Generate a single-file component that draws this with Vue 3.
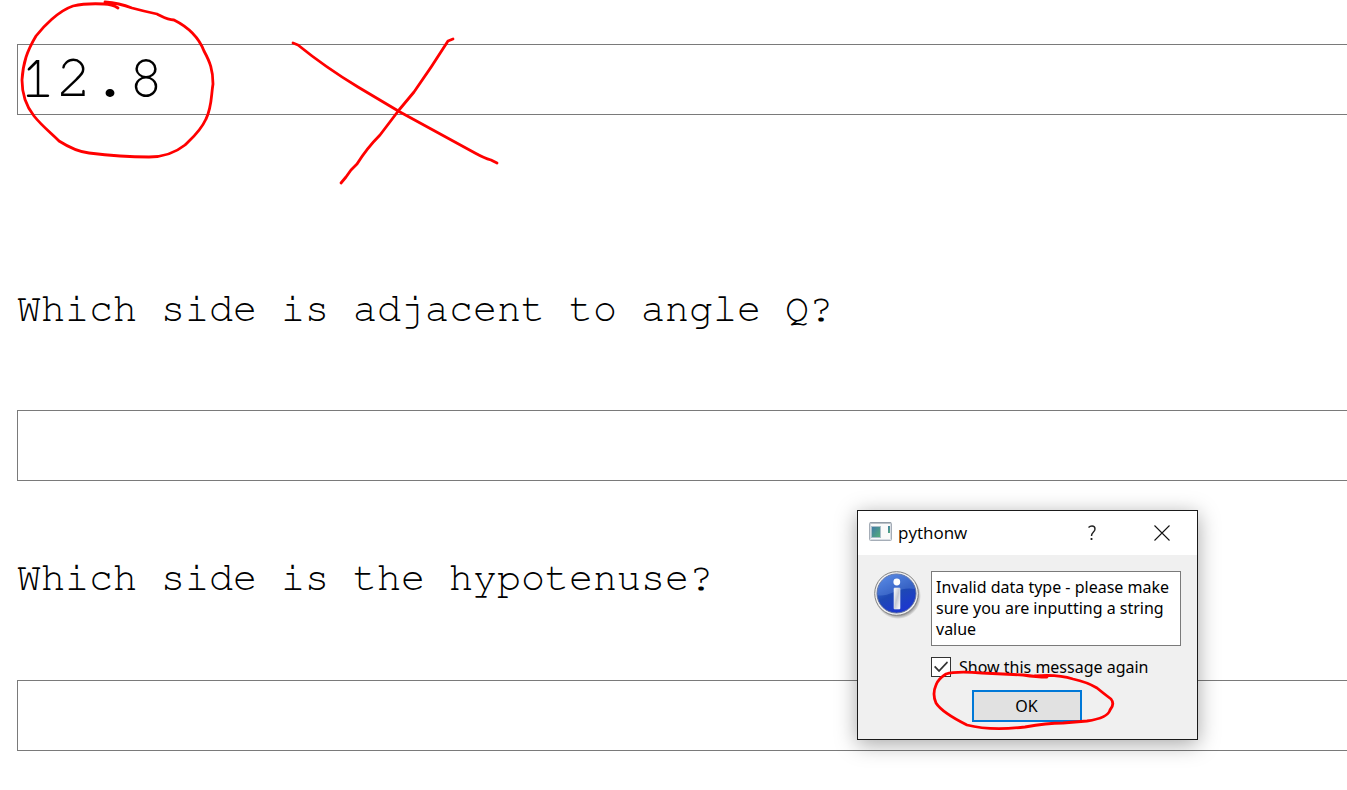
<script setup>
import { ref } from 'vue'

const side = ref('12.8')
const adjacent = ref('')
const hypotenuse = ref('')
const showAgain = ref(true)
</script>

<template>
  <div class="page">
    <form class="sheet" @submit.prevent>
      <input v-model="side" class="field" type="text" aria-label="Side length" />
      <label class="question first" for="adjacent">Which side is adjacent to angle Q?</label>
      <input id="adjacent" v-model="adjacent" class="field" type="text" />
      <label class="question" for="hypotenuse">Which side is the hypotenuse?</label>
      <input id="hypotenuse" v-model="hypotenuse" class="field" type="text" />
    </form>

    <section class="dialog" role="dialog" aria-labelledby="dialog-title">
      <header class="titlebar">
        <svg class="app-icon" width="23" height="19" viewBox="0 0 23 19" aria-hidden="true">
          <defs>
            <linearGradient id="pane" x1="0" y1="0" x2="1" y2="1">
              <stop offset="0" stop-color="#3f77a8" />
              <stop offset="1" stop-color="#56b177" />
            </linearGradient>
          </defs>
          <rect x="0.5" y="0.5" width="22" height="18" rx="1" fill="#fafafa" stroke="#a5adb7" />
          <path d="M1 1H22" stroke="#7d8894" />
          <path d="M1.5 2V17.5H21.5V2" fill="none" stroke="#d7dce3" />
          <rect x="2.5" y="4.5" width="9" height="11" fill="url(#pane)" stroke="#a9bfc9" />
          <rect x="19" y="4" width="2" height="7" fill="url(#pane)" />
        </svg>
        <h1 id="dialog-title" class="title">pythonw</h1>
        <button class="caption-button" type="button" aria-label="Help">
          <svg width="10" height="16" viewBox="0 0 10 16" aria-hidden="true">
            <path d="M1.5 2.5Q3 1 5 1Q8 1 8 4C8 7 4.5 7 4.5 11" fill="none" stroke="#222" stroke-width="1.4" />
            <rect x="3.6" y="13" width="1.8" height="2" fill="#222" />
          </svg>
        </button>
        <button class="caption-button" type="button" aria-label="Close">
          <svg width="16" height="16" viewBox="0 0 16 16" aria-hidden="true">
            <path d="M0.5 0.5L15.5 15.5M15.5 0.5L0.5 15.5" stroke="#111" stroke-width="1.1" />
          </svg>
        </button>
      </header>

      <div class="body">
        <svg class="info" width="48" height="48" viewBox="0 0 48 48" aria-hidden="true">
          <defs>
            <linearGradient id="disc" x1="0.2" y1="0" x2="0.7" y2="1">
              <stop offset="0" stop-color="#4b7fe0" />
              <stop offset="0.5" stop-color="#1e49b4" />
              <stop offset="1" stop-color="#1c35d2" />
            </linearGradient>
            <linearGradient id="stem" x1="0" y1="0" x2="1" y2="1">
              <stop offset="0" stop-color="#fff" />
              <stop offset="0.5" stop-color="#c4c8d2" />
              <stop offset="1" stop-color="#fff" />
            </linearGradient>
            <radialGradient id="shade">
              <stop offset="0.8" stop-color="#000" stop-opacity="0.45" />
              <stop offset="1" stop-color="#000" stop-opacity="0" />
            </radialGradient>
          </defs>
          <circle cx="24" cy="25" r="23" fill="url(#shade)" />
          <circle cx="22.5" cy="22.5" r="21.8" fill="#f3f3f3" stroke="#808080" />
          <circle cx="22.5" cy="22.5" r="19.5" fill="url(#disc)" stroke="#5f6f9d" />
          <path d="M3.5 24A19 19 0 0 1 41 18Q31 16 20 21T3.5 24Z" fill="#77a3ef" opacity="0.3" />
          <circle cx="22.8" cy="11" r="3.4" fill="#fff" />
          <rect x="20" y="17" width="6" height="21" rx="0.6" fill="url(#stem)" stroke="#e9ecf5" stroke-width="0.6" />
        </svg>
        <div class="content">
          <p class="message">Invalid data type - please make sure you are inputting a string value</p>
          <label class="again">
            <input v-model="showAgain" class="box" type="checkbox" />
            <span>Show this message again</span>
          </label>
        </div>
        <button class="ok" type="button">OK</button>
      </div>
    </section>

    <svg class="ink" width="1347" height="790" viewBox="0 0 1347 790" aria-hidden="true">
      <path d="M118 8Q112 4 104 4Q86 3 73 6C58 11 43 27 36 36C27 51 23 63 22 80C22 94 26 106 34 116C42 126 51 133 59 141C70 148 80 152 89 153Q121 157 149 157C162 157 175 153 185 145C191 139 200 132 206 119C212 107 211 96 213 84C213 70 210 62 204 51C199 38 190 28 174 20C168 20 165 18 157 14Q143 11 132 8Q119 3 105 2" />
      <path d="M293 43L298 45Q325 67 358 87L400 112L475 153Q484 158 491 160L497 163" />
      <path d="M453 39L448 41Q431 68 414 92L399 110L380 135Q367 148 357 164L351 170L346 177L341 183" />
      <path d="M1047 677Q1037 677 1023 675L982 673Q955 671 946 674Q938 679 936 685Q932 694 936 703C941 711 957 720 967 725Q990 731 1025 727Q1047 723 1063 723L1087 721Q1108 718 1110 710Q1115 704 1111 699Q1103 693 1097 688Q1087 682 1073 679Q1057 674 1035 676" />
    </svg>
  </div>
</template>

<style>
body {
  background: #fff;
}
</style>

<style scoped>
.page {
  position: relative;
  min-height: 100vh;
  overflow: hidden;
  color: #000;
  box-sizing: border-box;
}

.sheet {
  display: flex;
  flex-direction: column;
  padding: 44px 0 38px 17px;
  margin-right: -8px;
  font-family: FreeMono, "Nimbus Mono PS", "Liberation Mono", "Courier New", monospace;
}

.field {
  box-sizing: border-box;
  width: 100%;
  height: 71px;
  padding: 0 2px 4px;
  border: 1px solid #7a7a7a;
  border-radius: 0;
  background: #fff;
  color: #000;
  font: inherit;
  font-size: 60px;
  line-height: 65px;
  outline: none;
}

.question {
  padding: 74px 0 79px;
  font-size: 40px;
  line-height: 46px;
}

.question.first {
  padding: 171px 0 78px;
}

.dialog {
  position: absolute;
  top: 510px;
  left: 857px;
  box-sizing: border-box;
  width: 341px;
  border: 1px solid #1a1a1a;
  background: #f0f0f0;
  box-shadow: 0 4px 20px rgba(0, 0, 0, 0.35);
  font-family: "Noto Sans", Tahoma, sans-serif;
  font-size: 16px;
}

.titlebar {
  display: flex;
  align-items: center;
  height: 44px;
  background: #fff;
}

.app-icon {
  margin: 0 6px 4px 11px;
}

.title {
  flex: 1;
  margin: 0;
  font-family: "Open Sans", "Segoe UI", sans-serif;
  font-size: 17px;
  font-weight: 400;
  line-height: 24px;
}

.caption-button {
  display: flex;
  align-items: center;
  justify-content: center;
  width: 70px;
  height: 44px;
  padding: 0;
  border: 0;
  background: transparent;
}

.body {
  display: grid;
  grid-template-columns: 48px 1fr;
  column-gap: 9px;
  padding: 16px 16px 17px;
}

.message {
  box-sizing: border-box;
  height: 75px;
  margin: 0;
  padding: 5px 4px;
  border: 1px solid #7a7a7a;
  background: #fff;
  line-height: 21px;
}

.again {
  display: flex;
  align-items: center;
  gap: 8px;
  height: 20px;
  margin-top: 11px;
  line-height: 22px;
  white-space: nowrap;
}

.box {
  display: grid;
  place-items: center;
  box-sizing: border-box;
  width: 20px;
  height: 20px;
  margin: 0;
  border: 1px solid #333;
  background: #fff;
  appearance: none;
}

.box:checked::before {
  content: "";
  width: 14px;
  height: 12px;
  background: #333;
  clip-path: polygon(0 50%, 9% 40%, 36% 72%, 93% 2%, 100% 14%, 36% 94%);
}

.ok {
  grid-column: 1 / -1;
  justify-self: center;
  width: 110px;
  height: 32px;
  margin: 13px 2px 0 0;
  padding: 0;
  border: 2px solid #0078d7;
  border-radius: 0;
  background: #e1e1e1;
  color: #000;
  font: inherit;
}

.ink {
  position: absolute;
  top: 0;
  left: 0;
  fill: none;
  stroke: #f00;
  stroke-width: 2.8;
  stroke-linecap: round;
  stroke-linejoin: round;
  pointer-events: none;
}
</style>
